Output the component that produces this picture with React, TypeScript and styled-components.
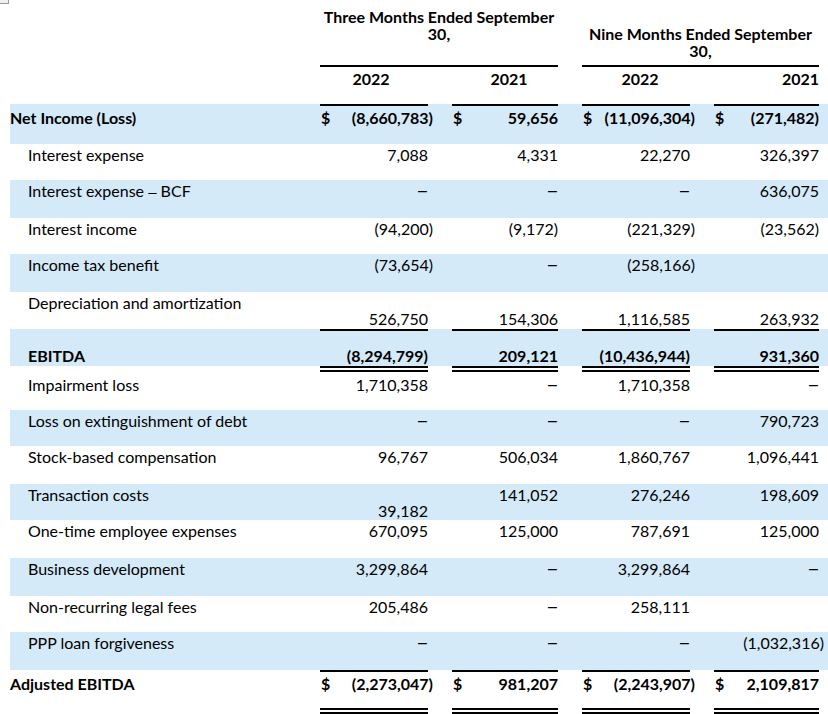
import React from 'react';
import styled, { createGlobalStyle } from 'styled-components';

const COLS = '310px 108px 24px 106px 24px 108px 24px 105px 9px';
const BLUE = '#d4eaf8';

type Rule = 'none' | 'top' | 'topDouble' | 'topBottomDouble';

const RULES: Record<Rule, string> = {
  none: 'none',
  top: 'inset 0 2px 0 #000',
  topDouble: 'inset 0 2px 0 #000, inset 0 4px 0 #fff, inset 0 6px 0 #000',
  topBottomDouble:
    'inset 0 2px 0 #000, inset 0 -2px 0 #000, inset 0 -4px 0 #fff, inset 0 -6px 0 #000',
};

const Global = createGlobalStyle`
  html, body { margin: 0; padding: 0; background: #fff; }
  body { font-family: Lato, "Liberation Sans", sans-serif; color: #000; }
`;

const Page = styled.div`
  position: relative;
  width: 828px;
  height: 714px;
  padding-left: 10px;
  box-sizing: border-box;
  overflow: hidden;
  font-size: 16px;
  line-height: 21px;
`;

const CornerMark = styled.div`
  position: absolute;
  top: 0;
  left: 0;
  width: 8px;
  height: 3px;
  background: #efefef;
  border-right: 1px solid #9a9a9a;
  border-bottom: 1px solid #9a9a9a;
`;

const HeadRow = styled.div`
  display: grid;
  grid-template-columns: ${COLS};
  height: 67px;
  font-weight: 700;
  line-height: 17px;
`;

const GroupTitle = styled.div<{ $span: string; $pad: number }>`
  grid-column: ${(p) => p.$span};
  padding-top: ${(p) => p.$pad}px;
  text-align: center;
  white-space: nowrap;
  box-shadow: inset 0 -2px 0 #000;
`;

const YearRow = styled.div`
  display: grid;
  grid-template-columns: ${COLS};
  height: 37px;
  font-weight: 700;
`;

const Year = styled.div<{ $col: number; $align: 'center' | 'right'; $shift: number }>`
  grid-column: ${(p) => p.$col};
  padding-top: 1px;
  text-align: ${(p) => p.$align};
  padding-left: ${(p) => (p.$shift > 0 ? p.$shift : 0)}px;
  padding-right: ${(p) => (p.$shift < 0 ? -p.$shift : 0)}px;
`;

const Row = styled.div<{ $h: number; $blue?: boolean }>`
  display: grid;
  grid-template-columns: ${COLS};
  height: ${(p) => p.$h}px;
  background: ${(p) => (p.$blue ? BLUE : 'transparent')};
`;

const Label = styled.div<{ $bold?: boolean; $indent?: boolean; $pad: number }>`
  grid-column: 1;
  padding-top: ${(p) => p.$pad}px;
  padding-left: ${(p) => (p.$indent ? 18 : 0)}px;
  font-weight: ${(p) => (p.$bold ? 700 : 400)};
  white-space: nowrap;
`;

const LabelDash = styled.span`
  font-family: "Liberation Sans", sans-serif;
  font-size: 15px;
`;

const Amount = styled.div<{ $col: number; $pad: number; $bold?: boolean; $rule: Rule }>`
  grid-column: ${(p) => p.$col};
  display: flex;
  align-items: flex-start;
  padding-top: ${(p) => p.$pad}px;
  box-shadow: ${(p) => RULES[p.$rule]};
  font-weight: ${(p) => (p.$bold ? 700 : 400)};
  white-space: nowrap;
`;

const Dollar = styled.span`
  padding-left: 1px;
`;

const Figure = styled.span<{ $hang?: boolean }>`
  margin-left: auto;
  margin-right: ${(p) => (p.$hang ? -5 : 0)}px;
`;

const Dash = styled.span`
  margin-left: auto;
  margin-right: 1px;
  font-family: "Liberation Sans", sans-serif;
  font-size: 16px;
`;

interface Line {
  label: string;
  bold?: boolean;
  indent?: boolean;
  h: number;
  blue?: boolean;
  pad: number;
  vals: (string | null)[];
  valPad?: number[];
  hang?: number[];
  dollar?: boolean;
  rule?: Rule;
}

const LINES: Line[] = [
  {
    label: 'Net Income (Loss)',
    bold: true,
    h: 40,
    blue: true,
    pad: 3,
    vals: ['(8,660,783)', '59,656', '(11,096,304)', '(271,482)'],
    hang: [0, 2],
    dollar: true,
    rule: 'top',
  },
  { label: 'Interest expense', indent: true, h: 36, pad: 0, vals: ['7,088', '4,331', '22,270', '326,397'] },
  { label: 'Interest expense – BCF', indent: true, h: 38, blue: true, pad: 0, vals: ['–', '–', '–', '636,075'] },
  {
    label: 'Interest income',
    indent: true,
    h: 36,
    pad: 0,
    vals: ['(94,200)', '(9,172)', '(221,329)', '(23,562)'],
    hang: [0, 2],
  },
  {
    label: 'Income tax benefit',
    indent: true,
    h: 38,
    blue: true,
    pad: 0,
    vals: ['(73,654)', '–', '(258,166)', null],
    hang: [0, 2],
  },
  {
    label: 'Depreciation and amortization',
    indent: true,
    h: 37,
    pad: 0,
    vals: ['526,750', '154,306', '1,116,585', '263,932'],
    valPad: [16, 16, 16, 16],
  },
  {
    label: 'EBITDA',
    bold: true,
    indent: true,
    h: 37,
    blue: true,
    pad: 16,
    vals: ['(8,294,799)', '209,121', '(10,436,944)', '931,360'],
    rule: 'top',
  },
  {
    label: 'Impairment loss',
    indent: true,
    h: 44,
    pad: 8,
    vals: ['1,710,358', '–', '1,710,358', '–'],
    rule: 'topDouble',
  },
  { label: 'Loss on extinguishment of debt', indent: true, h: 36, blue: true, pad: 0, vals: ['–', '–', '–', '790,723'] },
  { label: 'Stock-based compensation', indent: true, h: 38, pad: 0, vals: ['96,767', '506,034', '1,860,767', '1,096,441'] },
  {
    label: 'Transaction costs',
    indent: true,
    h: 36,
    blue: true,
    pad: 0,
    vals: ['39,182', '141,052', '276,246', '198,609'],
    valPad: [16, 0, 0, 0],
  },
  { label: 'One-time employee expenses', indent: true, h: 38, pad: 0, vals: ['670,095', '125,000', '787,691', '125,000'] },
  { label: 'Business development', indent: true, h: 38, blue: true, pad: 0, vals: ['3,299,864', '–', '3,299,864', '–'] },
  { label: 'Non-recurring legal fees', indent: true, h: 36, pad: 0, vals: ['205,486', '–', '258,111', null] },
  {
    label: 'PPP loan forgiveness',
    indent: true,
    h: 38,
    blue: true,
    pad: 0,
    vals: ['–', '–', '–', '(1,032,316)'],
    hang: [3],
  },
  {
    label: 'Adjusted EBITDA',
    bold: true,
    h: 44,
    pad: 3,
    vals: ['(2,273,047)', '981,207', '(2,243,907)', '2,109,817'],
    hang: [0, 2],
    dollar: true,
    rule: 'topBottomDouble',
  },
];

const VALUE_COLS = [2, 4, 6, 8];

function renderLabel(text: string) {
  const parts = text.split('–');
  if (parts.length === 1) return text;
  return (
    <>
      {parts[0]}
      <LabelDash>–</LabelDash>
      {parts[1]}
    </>
  );
}

export default function App() {
  return (
    <>
      <Global />
      <Page>
        <CornerMark />
        <HeadRow>
          <GroupTitle $span="2 / 5" $pad={8}>
            Three Months Ended September
            <br />
            30,
          </GroupTitle>
          <GroupTitle $span="6 / 9" $pad={25}>
            Nine Months Ended September
            <br />
            30,
          </GroupTitle>
        </HeadRow>
        <YearRow>
          <Year $col={2} $align="center" $shift={-6}>2022</Year>
          <Year $col={4} $align="center" $shift={8}>2021</Year>
          <Year $col={6} $align="center" $shift={8}>2022</Year>
          <Year $col={8} $align="right" $shift={0}>2021</Year>
        </YearRow>
        {LINES.map((line) => (
          <Row key={line.label} $h={line.h} $blue={line.blue}>
            <Label $bold={line.bold} $indent={line.indent} $pad={line.pad}>
              {renderLabel(line.label)}
            </Label>
            {line.vals.map((v, i) => (
              <Amount
                key={i}
                $col={VALUE_COLS[i]}
                $pad={line.valPad ? line.valPad[i] : line.pad}
                $bold={line.bold}
                $rule={line.rule ?? 'none'}
              >
                {line.dollar && <Dollar>$</Dollar>}
                {v === '–' ? (
                  <Dash>–</Dash>
                ) : (
                  v !== null && <Figure $hang={line.hang?.includes(i)}>{v}</Figure>
                )}
              </Amount>
            ))}
          </Row>
        ))}
      </Page>
    </>
  );
}
